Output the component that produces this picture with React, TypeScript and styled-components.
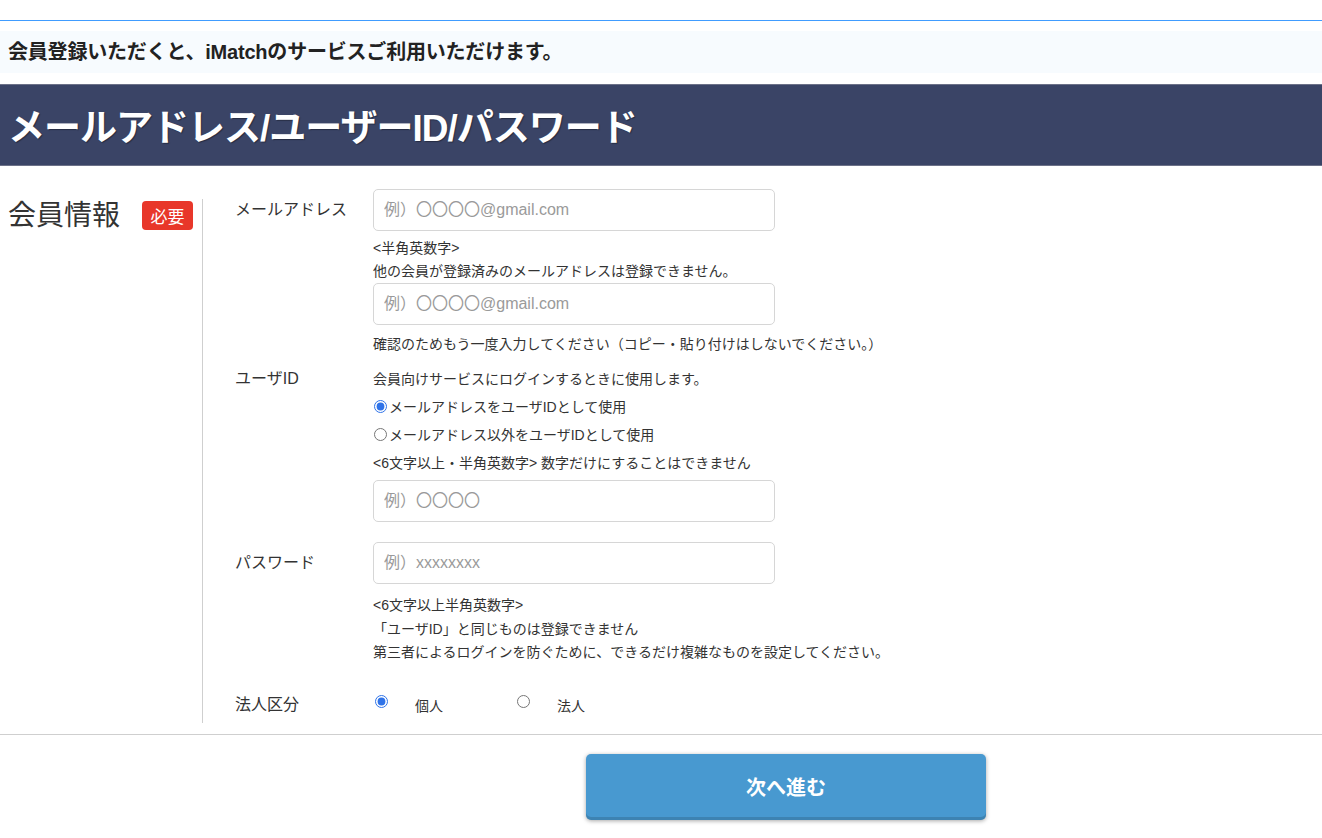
import React from 'react';
import styled, { createGlobalStyle } from 'styled-components';

const GlobalStyle = createGlobalStyle`
  body {
    margin: 0;
    background: #fff;
    color: #333;
    font-family: "Liberation Sans", "Noto Sans CJK JP", sans-serif;
  }
  * {
    box-sizing: border-box;
  }
`;

const TopLine = styled.div`
  height: 21px;
  border-bottom: 1px solid #409cff;
`;

const IntroBar = styled.p`
  margin: 10px 0 0;
  height: 42px;
  line-height: 42px;
  padding: 0 8px;
  background: #f7fbfe;
  font-size: 20px;
  font-weight: 700;
  letter-spacing: -0.2px;
  color: #222;
`;

const TitleBar = styled.h1`
  margin: 11px 0 0;
  height: 82px;
  display: flex;
  align-items: center;
  padding: 0 8px;
  background: #3a4466;
  border-top: 1px solid #6c7188;
  border-bottom: 1px solid #6c7188;
  color: #fff;
  font-size: 37px;
  font-weight: 700;
  letter-spacing: -1px;
  text-shadow: 1px 1px 1px rgba(0, 0, 0, 0.35);
`;

const Section = styled.section`
  display: flex;
  padding-top: 23px;
`;

const SideCol = styled.div`
  width: 203px;
  margin-top: 10px;
  padding: 2px 0 0 8px;
  border-right: 1px solid #cfcfcf;
  display: flex;
  align-items: flex-start;
  gap: 22px;
`;

const SideTitle = styled.h2`
  margin: 0;
  font-size: 28px;
  font-weight: 400;
  line-height: 29px;
  color: #333;
`;

const Badge = styled.span`
  display: inline-flex;
  align-items: center;
  justify-content: center;
  width: 51px;
  height: 29px;
  border-radius: 4px;
  background: #e8372a;
  color: #fff;
  font-size: 17px;
`;

const MainCol = styled.div`
  flex: 1;
  padding: 0 0 3px 32px;
`;

const Row = styled.div<{ gap?: number }>`
  display: grid;
  grid-template-columns: 138px 1fr;
  margin-top: ${p => p.gap ?? 0}px;
`;

const Label = styled.div<{ lh: number }>`
  font-size: 16px;
  line-height: ${p => p.lh}px;
  color: #333;
`;

const Field = styled.div`
  display: flex;
  flex-direction: column;
  align-items: flex-start;
`;

const TextInput = styled.input<{ mt?: number }>`
  width: 402px;
  height: 42px;
  margin: ${p => p.mt ?? 0}px 0 0;
  padding: 0 10px;
  border: 1px solid #d6d6d6;
  border-radius: 5px;
  font-family: "Liberation Sans", "Noto Sans CJK JP", sans-serif;
  font-size: 16px;
  color: #333;
  outline: none;

  &::placeholder {
    color: #9a9a9a;
  }
`;

const Help = styled.div<{ mt?: number; lh?: number }>`
  margin-top: ${p => p.mt ?? 0}px;
  font-size: 14px;
  line-height: ${p => p.lh ?? 22}px;
  color: #333;
`;

const RadioLine = styled.label<{ mt?: number }>`
  display: flex;
  align-items: center;
  height: 28px;
  margin-top: ${p => p.mt ?? 0}px;
  font-size: 14px;
  color: #333;
`;

const Radio = styled.input.attrs({ type: 'radio' })`
  width: 13px;
  height: 13px;
  margin: 0 2px 0 1px;
  accent-color: #2f73e8;
`;

const InlineRadios = styled.div`
  display: flex;
  align-items: center;
  height: 30px;
`;

const InlineOption = styled.label<{ w: number }>`
  display: flex;
  align-items: center;
  width: ${p => p.w}px;
  font-size: 14px;
  color: #333;

  input {
    margin: -6px 27px 0 2px;
  }
`;

const Divider = styled.hr`
  margin: 11px 0 0;
  border: 0;
  border-top: 1px solid #cfcfcf;
`;

const Footer = styled.div`
  display: flex;
  padding: 19px 0 20px 586px;
`;

const NextButton = styled.button`
  width: 400px;
  height: 66px;
  border: 0;
  border-radius: 5px;
  background: #4899d0;
  box-shadow: inset 0 -3px 0 rgba(0, 0, 0, 0.14), 0 1px 4px rgba(0, 0, 0, 0.35);
  color: #fff;
  font-family: "Liberation Sans", "Noto Sans CJK JP", sans-serif;
  font-size: 20px;
  font-weight: 700;
  cursor: pointer;
`;

const App: React.FC = () => {
  return (
    <>
      <GlobalStyle />
      <TopLine />
      <IntroBar>会員登録いただくと、iMatchのサービスご利用いただけます。</IntroBar>
      <TitleBar>メールアドレス/ユーザーID/パスワード</TitleBar>

      <Section>
        <SideCol>
          <SideTitle>会員情報</SideTitle>
          <Badge>必要</Badge>
        </SideCol>

        <MainCol>
          <Row>
            <Label lh={42}>メールアドレス</Label>
            <Field>
              <TextInput placeholder="例）〇〇〇〇@gmail.com" />
              <Help mt={6} lh={23}>
                &lt;半角英数字&gt;
                <br />
                他の会員が登録済みのメールアドレスは登録できません。
              </Help>
              <TextInput placeholder="例）〇〇〇〇@gmail.com" />
              <Help mt={8}>確認のためもう一度入力してください（コピー・貼り付けはしないでください。）</Help>
            </Field>
          </Row>

          <Row gap={13}>
            <Label lh={22}>ユーザID</Label>
            <Field>
              <Help>会員向けサービスにログインするときに使用します。</Help>
              <RadioLine mt={2}>
                <Radio name="uid" defaultChecked />
                メールアドレスをユーザIDとして使用
              </RadioLine>
              <RadioLine>
                <Radio name="uid" />
                メールアドレス以外をユーザIDとして使用
              </RadioLine>
              <Help mt={4}>&lt;6文字以上・半角英数字&gt; 数字だけにすることはできません</Help>
              <TextInput mt={6} placeholder="例）〇〇〇〇" />
            </Field>
          </Row>

          <Row gap={20}>
            <Label lh={42}>パスワード</Label>
            <Field>
              <TextInput placeholder="例）xxxxxxxx" />
              <Help mt={10} lh={23.5}>
                &lt;6文字以上半角英数字&gt;
                <br />
                「ユーザID」と同じものは登録できません
                <br />
                第三者によるログインを防ぐために、できるだけ複雑なものを設定してください。
              </Help>
            </Field>
          </Row>

          <Row gap={25}>
            <Label lh={30}>法人区分</Label>
            <InlineRadios>
              <InlineOption w={142}>
                <Radio name="corp" defaultChecked />
                個人
              </InlineOption>
              <InlineOption w={142}>
                <Radio name="corp" />
                法人
              </InlineOption>
            </InlineRadios>
          </Row>
        </MainCol>
      </Section>

      <Divider />
      <Footer>
        <NextButton>次へ進む</NextButton>
      </Footer>
    </>
  );
};

export default App;
